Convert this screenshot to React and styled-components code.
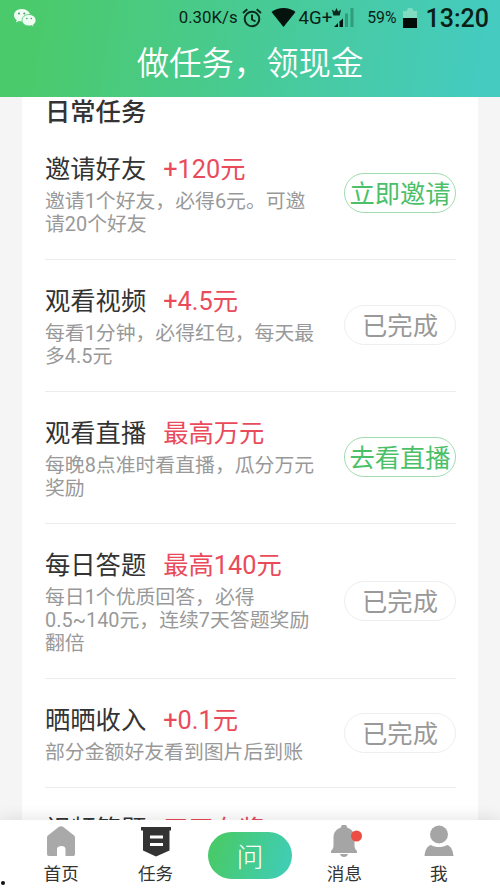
import React from 'react';
import styled, { createGlobalStyle } from 'styled-components';

const GlobalStyle = createGlobalStyle`
  * {
    box-sizing: border-box;
  }
  body {
    margin: 0;
    background: #f5f5f5;
    font-family: Roboto, 'Noto Sans CJK SC', sans-serif;
  }
  h1, h2, h3, p {
    margin: 0;
    font-weight: 400;
  }
  button {
    font-family: inherit;
    padding: 0;
  }
`;

const Page = styled.div`
  display: flex;
  flex-direction: column;
  height: 889px;
  overflow: hidden;
`;

// 顶部
const Header = styled.header`
  flex: none;
  height: 97px;
  background: linear-gradient(100deg, #4bca6c 8%, #45cbc0 96%);
`;
const StatusBar = styled.div`
  display: flex;
  align-items: center;
  height: 35px;
  padding: 0 11px 0 14px;
  color: #0b1f18;
  white-space: nowrap;
  svg {
    display: block;
    flex: none;
  }
`;
const StatusText = styled.span`
  font-size: ${({ $size }) => $size}px;
  font-weight: ${({ $bold }) => ($bold ? 500 : 400)};
  line-height: 35px;
  padding-top: ${({ $top }) => $top || 0}px;
  margin-left: ${({ $left }) => $left || 0}px;
`;
const Spacer = styled.div`
  flex: 1;
`;
const StatusIcon = styled.svg`
  margin-left: ${({ $left }) => $left || 0}px;
`;
const PageTitle = styled.h1`
  color: #fff;
  font-size: 32.4px;
  line-height: 59px;
  font-weight: 350;
  text-align: center;
`;

// 任务列表
const Content = styled.main`
  flex: 1;
  min-height: 0;
  padding: 0 22px;
  overflow: hidden;
`;
const Card = styled.section`
  background: #fff;
  padding: 0 22px 0 23px;
`;
const SectionTitle = styled.h2`
  height: 31px;
  color: #333;
  font-size: 25.3px;
  line-height: 31px;
  font-weight: 500;
`;
const TaskRow = styled.article`
  display: flex;
  align-items: center;
  justify-content: space-between;
  padding: 22px 0 23px;
  border-bottom: 1px solid #ececec;
`;
const TaskInfo = styled.div`
  width: 275px;
`;
const TaskTitle = styled.h3`
  display: flex;
  gap: 17px;
  color: #333;
  font-size: 25.3px;
  line-height: 40px;
  white-space: nowrap;
`;
const Reward = styled.span`
  color: #e94b5b;
`;
const TaskDesc = styled.p`
  color: #999;
  font-size: 19.85px;
  line-height: 23px;
`;
const TaskButton = styled.button`
  flex: none;
  width: 112px;
  height: 40px;
  padding-top: 4px;
  border: 1px solid ${({ $done }) => ($done ? '#eee' : '#9fdcb0')};
  border-radius: 20px;
  background: #fff;
  color: ${({ $done }) => ($done ? '#999' : '#4cc069')};
  font-size: 25.3px;
  line-height: 34px;
  white-space: nowrap;
`;

// 底部导航
const TabBar = styled.nav`
  position: relative;
  flex: none;
  display: grid;
  grid-template-columns: repeat(5, 94.4px);
  justify-content: center;
  height: 69px;
  background: #fff;
  box-shadow: 0 -3px 14px rgba(0, 0, 0, 0.09);
`;
const Tab = styled.a`
  display: flex;
  flex-direction: column;
  align-items: center;
  padding-top: 5px;
  color: #333;
  font-size: 17.6px;
  line-height: 26px;
  svg {
    display: block;
    margin-bottom: 3px;
  }
`;
const AskButton = styled.button`
  align-self: start;
  justify-self: center;
  width: 84px;
  height: 47px;
  margin-top: 12px;
  padding-top: 6px;
  border: 0;
  border-radius: 24px;
  background: linear-gradient(110deg, #48ca6c 15%, #40cdb4 90%);
  color: #fff;
  font-size: 27px;
  font-weight: 300;
  line-height: 41px;
`;
const Dot = styled.i`
  position: absolute;
  left: 1px;
  bottom: 4px;
  width: 4px;
  height: 4px;
  border-radius: 50%;
  background: #111;
`;

const WechatIcon = () => (
  <svg width="23" height="20" viewBox="0 0 23 20">
    <path
      d="M7.5 1C3.300 1 0 3.800 0 7.300c0 2 1 3.700 2.700 4.800L2 14.500l2.800-1.400c1 .3 1.800.4 3 .4L16 6C15 3 11.500 1 7.500 1z"
      fill="#effcf2"
    />
    <path
      d="M15 6.500c-4 0-7 2.500-7 5.800S11 18 15 18c.9 0 1.700-.1 2.500-.4l2.500 1.300-.6-2.200c1.600-1 2.600-2.600 2.600-4.400 0-3.300-3-5.800-7-5.800z"
      fill="#effcf2"
      stroke="#4bc970"
      strokeWidth=".8"
    />
    <g fill="#4b9c68">
      <circle cx="5" cy="5.500" r="1" />
      <circle cx="10.300" cy="5.500" r="1" />
      <circle cx="12.800" cy="10.500" r=".8" />
      <circle cx="17.300" cy="10.500" r=".8" />
    </g>
  </svg>
);

const AlarmIcon = () => (
  <StatusIcon $left={4} width="20" height="20" viewBox="0 0 20 20" fill="none" stroke="#0b2b1e" strokeWidth="2">
    <circle cx="10" cy="11" r="7.300" />
    <path d="M1 5l4.300-3.700M19 5l-4.300-3.700M10 6.500v5l3.500 2" />
  </StatusIcon>
);

const WifiIcon = () => (
  <StatusIcon $left={9} width="25" height="19" viewBox="0 0 25 19">
    <path d="M12.500 19L.5 4C4 1.300 8 0 12.500 0s8.500 1.300 12 4z" fill="#04130d" />
  </StatusIcon>
);

// 信号图标左上角带皇冠
const SignalIcon = () => (
  <StatusIcon width="23" height="21" viewBox="0 0 23 21">
    <path d="M0 2.500l2.800 2L4.500 1l1.700 3.500L9 2.500 7.700 8.500H1.300z" fill="#0b2b1e" />
    <path d="M2 20l4-4v4zM7.500 14.500l3.500-3V20H7.500z" fill="#06140f" />
    <path d="M13 6.500h3V20h-3zM18.500 1h3v19h-3z" fill="#2f9c7b" />
  </StatusIcon>
);

const BatteryIcon = () => (
  <StatusIcon $left={6} width="14" height="20" viewBox="0 0 14 20">
    <path d="M0 3h3.500L5 0h4l1.500 3H14v7H0z" fill="#7fdcc0" />
    <path d="M0 10h14v10H0z" fill="#030b08" />
  </StatusIcon>
);

const HomeIcon = () => (
  <svg width="30" height="33" viewBox="0 0 30 33">
    <path
      d="M13 1.800c1.200-.9 2.800-.9 4 0l10.500 8.300c.9.700 1.500 1.500 1.500 2.700V29c0 1.400-.8 2-2 2h-7.500v-7c0-2-1.800-3-4-3s-4.500 1-4.500 3v7H3c-1.300 0-2-.7-2-2V12.800c0-1.200.5-2 1.500-2.700z"
      fill="#a9a9a9"
    />
  </svg>
);

const TaskIcon = () => (
  <svg width="30" height="33" viewBox="0 0 30 33">
    <path d="M0 2h30v3.500h-1.500v20L15 31.500l-13-6v-20H0z" fill="#333" />
    <path d="M9 10.500h13v3H9zM9 18h13v3H9z" fill="#fff" />
  </svg>
);

const BellIcon = () => (
  <svg width="38" height="33" viewBox="0 0 38 33">
    <path
      d="M16 2.500a3 3 0 0 1 6 0c4.600 1.500 7.500 5 7.500 10v8c0 2.300.7 3.800 2.500 5.500v2H6v-2c1.800-1.700 2.500-3.200 2.500-5.500v-8c0-5 2.900-8.500 7.500-10zM15 29h8c-.6 2-2 3-4 3s-3.400-1-4-3z"
      fill="#a5a5a5"
    />
    <circle cx="31.500" cy="11" r="5.500" fill="#ed4c42" />
  </svg>
);

const UserIcon = () => (
  <svg width="30" height="33" viewBox="0 0 30 33">
    <circle cx="15" cy="9.500" r="9" fill="#a5a5a5" />
    <path d="M.5 31c.5-5 2.300-10 6.500-11 4.500 2.800 11.500 2.800 16 0 4.200 1 6 6 6.500 11z" fill="#a5a5a5" />
  </svg>
);

const tasks = [
  { title: '邀请好友', reward: '+120元', desc: '邀请1个好友，必得6元。可邀请20个好友', action: '立即邀请' },
  { title: '观看视频', reward: '+4.5元', desc: '每看1分钟，必得红包，每天最多4.5元', action: '已完成', done: true },
  { title: '观看直播', reward: '最高万元', desc: '每晚8点准时看直播，瓜分万元奖励', action: '去看直播' },
  { title: '每日答题', reward: '最高140元', desc: '每日1个优质回答，必得0.5~140元，连续7天答题奖励翻倍', action: '已完成', done: true },
  { title: '晒晒收入', reward: '+0.1元', desc: '部分金额好友看到图片后到账', action: '已完成', done: true },
  { title: '视频答题', reward: '天天有奖' },
];

const App = () => {
  return (
    <Page>
      <GlobalStyle />
      <Header>
        <StatusBar>
          <WechatIcon />
          <Spacer />
          <StatusText $size={16.8}>0.30K/s</StatusText>
          <AlarmIcon />
          <WifiIcon />
          <StatusText $size={18.6} $left={3} $top={1}>4G+</StatusText>
          <SignalIcon />
          <StatusText $size={15.8} $left={12}>59%</StatusText>
          <BatteryIcon />
          <StatusText $size={25} $left={9} $top={2} $bold>13:20</StatusText>
        </StatusBar>
        <PageTitle>做任务，领现金</PageTitle>
      </Header>
      <Content>
        <Card>
          <SectionTitle>日常任务</SectionTitle>
          {tasks.map(({ title, reward, desc, action, done }) => (
            <TaskRow key={title}>
              <TaskInfo>
                <TaskTitle>
                  {title}
                  <Reward>{reward}</Reward>
                </TaskTitle>
                {desc && <TaskDesc>{desc}</TaskDesc>}
              </TaskInfo>
              {action && <TaskButton $done={done}>{action}</TaskButton>}
            </TaskRow>
          ))}
        </Card>
      </Content>
      <TabBar>
        <Tab>
          <HomeIcon />
          首页
        </Tab>
        <Tab>
          <TaskIcon />
          任务
        </Tab>
        <AskButton>问</AskButton>
        <Tab>
          <BellIcon />
          消息
        </Tab>
        <Tab>
          <UserIcon />
          我
        </Tab>
        <Dot />
      </TabBar>
    </Page>
  );
};

export default App;
